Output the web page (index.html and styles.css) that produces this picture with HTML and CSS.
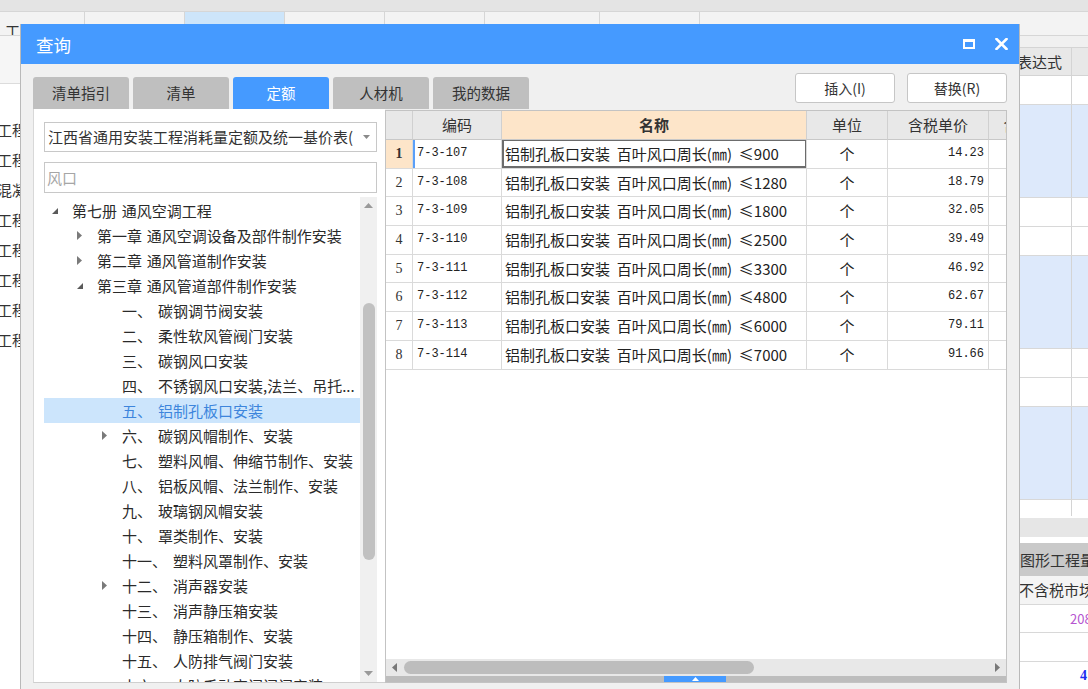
FILE: index.html
```html
<!DOCTYPE html>
<html lang="zh-CN">
<head>
<meta charset="utf-8">
<title>查询</title>
<link rel="stylesheet" href="styles.css">
</head>
<body>
<div class="app">
  <div class="topstrip"></div>
  <div class="apptabs">
    <div class="apptab first">工程概况</div>
    <div class="apptab">取费设置</div>
    <div class="apptab on">分部分项</div>
    <div class="apptab">措施项目</div>
    <div class="apptab">其他项目</div>
    <div class="apptab wide">人材机汇总</div>
    <div class="apptab">费用汇总</div>
  </div>
  <div class="workspace">
    <div class="leftcol">
      <div class="lc-head"></div>
      <div class="lc-gap"></div>
      <div class="lc-row">工程量清单</div>
      <div class="lc-row">工程量清单</div>
      <div class="lc-row">混凝土工程</div>
      <div class="lc-row">工程量清单</div>
      <div class="lc-row">工程量清单</div>
      <div class="lc-row">工程量清单</div>
      <div class="lc-row">工程量清单</div>
      <div class="lc-row">工程量清单</div>
    </div>
    <div class="centerarea"></div>
    <div class="rightcol">
      <div class="rc-top"></div>
      <div class="rc-head"><div class="rc-c1">表达式</div><div class="rc-c2"></div></div>
      <div class="rc-row h29"><div class="rc-c1"></div><div class="rc-c2"></div></div>
      <div class="rc-row h93"><div class="rc-c1"></div><div class="rc-c2"></div></div>
      <div class="rc-row h29"><div class="rc-c1"></div><div class="rc-c2"></div></div>
      <div class="rc-row h29"><div class="rc-c1"></div><div class="rc-c2"></div></div>
      <div class="rc-row h93"><div class="rc-c1"></div><div class="rc-c2"></div></div>
      <div class="rc-row h29"><div class="rc-c1"></div><div class="rc-c2"></div></div>
      <div class="rc-row h29"><div class="rc-c1"></div><div class="rc-c2"></div></div>
      <div class="rc-row h93"><div class="rc-c1"></div><div class="rc-c2"></div></div>
      <div class="rc-row h16"><div class="rc-c1"></div><div class="rc-c2"></div></div>
      <div class="rc-sp2"></div>
      <div class="rc-gray"></div>
      <div class="rc-sp6"></div>
      <div class="rc-dark">图形工程量</div>
      <div class="rc-sub">不含税市场价</div>
      <div class="rc-num purple">208.00</div>
      <div class="rc-num"></div>
      <div class="rc-num blue">4</div>
    </div>
  </div>

  <div class="dialog">
    <div class="dtitle">
      <span class="dt-text">查询</span>
      <span class="dt-icons">
        <svg width="12" height="10" viewBox="0 0 12 10"><rect x="1" y="1.5" width="10" height="7.5" fill="none" stroke="#fff" stroke-width="2"/><rect x="0" y="0" width="12" height="3" fill="#fff"/></svg>
        <svg width="13" height="12" viewBox="0 0 13 12"><path d="M1.5 1L11.5 11M11.5 1L1.5 11" stroke="#fff" stroke-width="2.6" stroke-linecap="square"/></svg>
      </span>
    </div>
    <div class="dbody">
      <div class="toolrow">
        <div class="qtabs">
          <div class="qtab">清单指引</div>
          <div class="qtab">清单</div>
          <div class="qtab on">定额</div>
          <div class="qtab">人材机</div>
          <div class="qtab">我的数据</div>
        </div>
        <div class="btns">
          <div class="btn">插入(I)</div>
          <div class="btn">替换(R)</div>
        </div>
      </div>
      <div class="content">
        <div class="lpanel">
          <div class="combo"><span class="combo-text">江西省通用安装工程消耗量定额及统一基价表(</span><svg width="7" height="4" viewBox="0 0 7 4"><path d="M0 0H7L3.5 4Z" fill="#8a8a8a"/></svg></div>
          <div class="search">风口</div>
          <div class="tree">
            <div class="trows">
              <div class="trow l0"><span class="tg"><svg width="6" height="6" viewBox="0 0 6 6"><path d="M6 0V6H0Z" fill="#5a5a5a"/></svg></span><span class="tx">第七册 通风空调工程</span></div>
              <div class="trow l1"><span class="tg"><svg width="5" height="9" viewBox="0 0 5 9"><path d="M0 0L5 4.5L0 9Z" fill="#7a7a7a"/></svg></span><span class="tx">第一章 通风空调设备及部件制作安装</span></div>
              <div class="trow l1"><span class="tg"><svg width="5" height="9" viewBox="0 0 5 9"><path d="M0 0L5 4.5L0 9Z" fill="#7a7a7a"/></svg></span><span class="tx">第二章 通风管道制作安装</span></div>
              <div class="trow l1"><span class="tg"><svg width="6" height="6" viewBox="0 0 6 6"><path d="M6 0V6H0Z" fill="#5a5a5a"/></svg></span><span class="tx">第三章 通风管道部件制作安装</span></div>
              <div class="trow l2"><span class="tg"></span><span class="num">一、</span><span class="tx">碳钢调节阀安装</span></div>
              <div class="trow l2"><span class="tg"></span><span class="num">二、</span><span class="tx">柔性软风管阀门安装</span></div>
              <div class="trow l2"><span class="tg"></span><span class="num">三、</span><span class="tx">碳钢风口安装</span></div>
              <div class="trow l2"><span class="tg"></span><span class="num">四、</span><span class="tx">不锈钢风口安装,法兰、吊托...</span></div>
              <div class="trow l2 sel"><span class="tg"></span><span class="num">五、</span><span class="tx">铝制孔板口安装</span></div>
              <div class="trow l2"><span class="tg"><svg width="5" height="9" viewBox="0 0 5 9"><path d="M0 0L5 4.5L0 9Z" fill="#7a7a7a"/></svg></span><span class="num">六、</span><span class="tx">碳钢风帽制作、安装</span></div>
              <div class="trow l2"><span class="tg"></span><span class="num">七、</span><span class="tx">塑料风帽、伸缩节制作、安装</span></div>
              <div class="trow l2"><span class="tg"></span><span class="num">八、</span><span class="tx">铝板风帽、法兰制作、安装</span></div>
              <div class="trow l2"><span class="tg"></span><span class="num">九、</span><span class="tx">玻璃钢风帽安装</span></div>
              <div class="trow l2"><span class="tg"></span><span class="num">十、</span><span class="tx">罩类制作、安装</span></div>
              <div class="trow l2"><span class="tg"></span><span class="num">十一、</span><span class="tx">塑料风罩制作、安装</span></div>
              <div class="trow l2"><span class="tg"><svg width="5" height="9" viewBox="0 0 5 9"><path d="M0 0L5 4.5L0 9Z" fill="#7a7a7a"/></svg></span><span class="num">十二、</span><span class="tx">消声器安装</span></div>
              <div class="trow l2"><span class="tg"></span><span class="num">十三、</span><span class="tx">消声静压箱安装</span></div>
              <div class="trow l2"><span class="tg"></span><span class="num">十四、</span><span class="tx">静压箱制作、安装</span></div>
              <div class="trow l2"><span class="tg"></span><span class="num">十五、</span><span class="tx">人防排气阀门安装</span></div>
              <div class="trow l2"><span class="tg"></span><span class="num">十六、</span><span class="tx">人防手动密闭阀门安装</span></div>
            </div>
            <div class="vscroll">
              <div class="va"><svg width="9" height="5" viewBox="0 0 9 5"><path d="M0 5L4.5 0L9 5Z" fill="#9a9a9a"/></svg></div>
              <div class="vthumb"></div>
              <div class="vsp"></div>
              <div class="va"><svg width="9" height="5" viewBox="0 0 9 5"><path d="M0 0L4.5 5L9 0Z" fill="#9a9a9a"/></svg></div>
            </div>
          </div>
        </div>
        <div class="grid">
          <div class="gwrap">
            <div class="gtable">
              <div class="gh"></div><div class="gh">编码</div><div class="gh peach">名称</div><div class="gh">单位</div><div class="gh">含税单价</div><div class="gh">含税合价</div>

              <div class="gc rn cur">1</div><div class="gc code focus">7-3-107</div><div class="gc name selcell">铝制孔板口安装 百叶风口周长(㎜) ≤900</div><div class="gc unit">个</div><div class="gc price">14.23</div><div class="gc"></div>
              <div class="gc rn">2</div><div class="gc code">7-3-108</div><div class="gc name">铝制孔板口安装 百叶风口周长(㎜) ≤1280</div><div class="gc unit">个</div><div class="gc price">18.79</div><div class="gc"></div>
              <div class="gc rn">3</div><div class="gc code">7-3-109</div><div class="gc name">铝制孔板口安装 百叶风口周长(㎜) ≤1800</div><div class="gc unit">个</div><div class="gc price">32.05</div><div class="gc"></div>
              <div class="gc rn">4</div><div class="gc code">7-3-110</div><div class="gc name">铝制孔板口安装 百叶风口周长(㎜) ≤2500</div><div class="gc unit">个</div><div class="gc price">39.49</div><div class="gc"></div>
              <div class="gc rn">5</div><div class="gc code">7-3-111</div><div class="gc name">铝制孔板口安装 百叶风口周长(㎜) ≤3300</div><div class="gc unit">个</div><div class="gc price">46.92</div><div class="gc"></div>
              <div class="gc rn">6</div><div class="gc code">7-3-112</div><div class="gc name">铝制孔板口安装 百叶风口周长(㎜) ≤4800</div><div class="gc unit">个</div><div class="gc price">62.67</div><div class="gc"></div>
              <div class="gc rn">7</div><div class="gc code">7-3-113</div><div class="gc name">铝制孔板口安装 百叶风口周长(㎜) ≤6000</div><div class="gc unit">个</div><div class="gc price">79.11</div><div class="gc"></div>
              <div class="gc rn">8</div><div class="gc code">7-3-114</div><div class="gc name">铝制孔板口安装 百叶风口周长(㎜) ≤7000</div><div class="gc unit">个</div><div class="gc price">91.66</div><div class="gc"></div>
            </div>
          </div>
          <div class="gfill"></div>
          <div class="hscroll">
            <div class="ha"><svg width="5" height="9" viewBox="0 0 5 9"><path d="M5 0V9L0 4.5Z" fill="#787878"/></svg></div>
            <div class="hthumb"></div>
            <div class="hsp"></div>
            <div class="ha"><svg width="5" height="9" viewBox="0 0 5 9"><path d="M0 0V9L5 4.5Z" fill="#787878"/></svg></div>
          </div>
          <div class="gbar"><div class="gbar-tab"><svg width="7" height="4" viewBox="0 0 7 4"><path d="M0 4L3.5 0L7 4Z" fill="#fff"/></svg></div></div>
        </div>
      </div>
    </div>
  </div>
</div>
</body>
</html>
```

FILE: styles.css
```css
* { box-sizing: border-box; }
html, body { margin: 0; padding: 0; }
body {
  font-family: "Noto Sans CJK SC", "Noto Sans", sans-serif;
  color: #333;
  background: #fff;
}
.app {
  position: relative;
  width: 1088px;
  height: 689px;
  overflow: hidden;
  background: #fff;
}

/* background application */
.topstrip { height: 12px; background: #e4e4e4; border-bottom: 1px solid #d6d6d6; }
.apptabs { display: flex; height: 24px; background: #f3f3f3; border-bottom: 1px solid #d6d6d6; }
.apptab {
  width: 100px; flex: none;
  border-right: 1px solid #d6d6d6;
  font-size: 15px; line-height: 37px;
  text-align: center; white-space: nowrap; overflow: hidden;
  color: #333;
}
.apptab.first { width: 85px; text-align: left; padding-left: 5px; }
.apptab.wide { width: 115px; }
.apptab.on { background: #cde5fa; }

.workspace { display: flex; height: 653px; }
.leftcol { width: 100px; flex: none; background: #fff; overflow: hidden; }
.lc-head { height: 48px; background: #f6f6f6; border-bottom: 1px solid #dcdcdc; }
.lc-gap { height: 31px; }
.lc-row { height: 30px; line-height: 30px; font-size: 15px; margin-left: -3px; white-space: nowrap; color: #333; }
.centerarea { flex: 1; background: #fff; }

.rightcol { width: 80px; flex: none; display: flex; flex-direction: column; font-size: 15px; overflow: hidden; }
.rc-top { height: 11px; background: #f0f0f0; flex: none; }
.rc-head { height: 29px; flex: none; display: flex; background: #e8e8e8; border-top: 1px solid #d4d4d4; border-bottom: 1px solid #d4d4d4; line-height: 27px; }
.rc-row { display: flex; flex: none; border-bottom: 1px solid #d8d8d8; background: #fff; }
.rc-c1 { width: 64px; flex: none; border-right: 1px solid #d4d4d4; text-align: center; white-space: nowrap; }
.rc-c2 { flex: 1; }
.h29 { height: 29px; }
.h93 { height: 93px; background: #dde9fb; }
.h16 { height: 16px; border-bottom: none; }
.rc-sp2 { height: 2px; flex: none; background: #fff; }
.rc-gray { height: 19px; flex: none; background: #e6e6e6; }
.rc-sp6 { height: 6px; flex: none; background: #fff; }
.rc-dark { height: 33px; flex: none; background: #c9c9c9; line-height: 33px; padding-left: 12px; white-space: nowrap; color: #333; }
.rc-sub { height: 29px; flex: none; background: #f4f4f4; border-bottom: 1px solid #d8d8d8; line-height: 28px; padding-left: 11px; white-space: nowrap; }
.rc-num { height: 29px; flex: none; border-bottom: 1px solid #d8d8d8; line-height: 28px; white-space: nowrap; font-size: 13px; }
.rc-num.purple { color: #b655d0; padding-left: 62px; height: 28px; }
.rc-num.blue { color: #1c2cf0; font-weight: bold; padding-left: 72px; font-family: "Liberation Serif", serif; font-size: 14px; border-bottom: none; }

/* dialog window */
.dialog {
  position: absolute;
  left: 20px; top: 24px;
  width: 1000px; height: 680px;
  background: #f0f0f0;
  border-left: 1px solid #b9b9b9;
  border-right: 1px solid #b9b9b9;
}
.dtitle {
  height: 40px;
  background: #459aff;
  display: flex; align-items: center; justify-content: space-between;
  padding: 0 11px 0 15px;
}
.dt-text { color: #fff; font-size: 17.5px; line-height: 40px; padding-top: 2px; }
.dt-icons { display: flex; align-items: center; gap: 20px; }
.dt-icons svg { display: block; }

.dbody { padding: 9px 12px 0 12px; }
.toolrow { display: flex; justify-content: space-between; height: 36px; }
.qtabs { display: flex; gap: 4px; margin-top: 4px; }
.qtab {
  width: 96px; height: 32px;
  background: #bfbfbf;
  border-radius: 3px 3px 0 0;
  text-align: center;
  font-size: 14.5px; line-height: 32px;
  color: #333;
}
.qtab.on { background: #459aff; color: #fff; }
.btns { display: flex; gap: 12px; }
.btn {
  width: 100px; height: 30px;
  background: #fff;
  border: 1px solid #c6c6c6;
  border-radius: 3px;
  font-size: 14px; line-height: 28px;
  text-align: center; color: #333;
}

.content { display: flex; height: 574px; }

/* left panel */
.lpanel {
  width: 352px; flex: none;
  background: #fff;
  border-left: 1px solid #d8d8d8;
  border-bottom: 1px solid #cfcfcf;
  padding: 13px 8px 0 10px;
}
.combo {
  height: 30px;
  border: 1px solid #c8c8c8;
  display: flex; align-items: center; justify-content: space-between;
  padding: 0 6px 0 3px;
  font-size: 15px; line-height: 28px;
  white-space: nowrap; overflow: hidden;
  color: #333;
}
.combo-text { overflow: hidden; }
.combo svg { flex: none; margin-left: 6px; }
.search {
  margin-top: 10px;
  height: 31px;
  border: 1px solid #c8c8c8;
  padding-left: 2px;
  font-size: 15px; line-height: 29px;
  color: #a6a6a6;
}
.tree { margin-top: 4px; height: 485px; display: flex; }
.trows { width: 316px; flex: none; overflow: hidden; padding-top: 1px; }
.trow {
  height: 25px;
  display: flex; align-items: center;
  font-size: 15px; line-height: 25px;
  white-space: nowrap;
  color: #2a2a2a;
  word-spacing: 1.5px;
}
.trow.l0 { padding-left: 3px; }
.trow.l1 { padding-left: 28px; }
.trow.l2 { padding-left: 53px; }
.tg { width: 25px; flex: none; display: flex; align-items: center; padding-left: 5px; }
.tg svg { display: block; }
.num { margin-right: 6px; }
.trow.sel { background: #cce5fc; color: #3d85dc; }

.vscroll { width: 17px; flex: none; background: #f0f0f0; display: flex; flex-direction: column; align-items: center; }
.va { height: 17px; width: 17px; flex: none; display: flex; align-items: center; justify-content: center; }
.va svg { display: block; }
.vthumb { width: 12px; height: 257px; flex: none; border-radius: 6px; background: #c1c1c1; margin-top: 89px; }
.vsp { flex: 1; }

/* grid */
.grid {
  width: 622px; height: 573px; flex: none;
  margin-top: 1px;
  border: 1px solid #c3c3c3;
  background: #fff;
  display: flex; flex-direction: column;
  overflow: hidden;
}
.gwrap { overflow: hidden; flex: none; }
.gtable {
  display: grid;
  grid-template-columns: 27px 89px 305px 81px 101px 90px;
  width: 693px;
}
.gh {
  height: 29px;
  background: #e8e8e8;
  border-right: 1px solid #d0d0d0;
  border-bottom: 1px solid #c8c8c8;
  text-align: center;
  font-size: 15px; line-height: 28px;
  color: #333; white-space: nowrap;
}
.gh.peach { background: #fde5c9; font-weight: bold; }
.gc {
  height: 28.7px;
  border-right: 1px solid #dadada;
  border-bottom: 1px solid #dadada;
  font-size: 15px; line-height: 27.7px;
  white-space: nowrap; overflow: hidden;
  color: #222;
}
.gc.rn { text-align: center; font-family: "Liberation Serif", serif; font-size: 14px; color: #333; }
.gc.rn.cur { background: #fde5c9; font-weight: bold; }
.gc.code { font-family: "Liberation Mono", monospace; font-size: 12px; padding-left: 4px; }
.gc.code.focus { box-shadow: inset 2px 0 0 #5a9ff8; }
.gc.name { padding-left: 3px; word-spacing: 3.5px; }
.gc.name.selcell { box-shadow: inset 2px 0 0 #6c6c6c, inset 0 -2px 0 #6c6c6c, inset -1px 0 0 #6c6c6c, inset 0 1px 0 #6c6c6c; }
.gc.unit { text-align: center; }
.gc.price { font-family: "Liberation Mono", monospace; font-size: 12px; text-align: right; padding-right: 4px; }

.gfill { flex: 1; }
.hscroll { height: 17px; flex: none; background: #e8e8e8; display: flex; align-items: center; }
.ha { width: 17px; height: 17px; flex: none; display: flex; align-items: center; justify-content: center; }
.ha svg { display: block; }
.hthumb { width: 350px; height: 13px; flex: none; border-radius: 7px; background: #bdbdbd; margin-left: 1px; }
.hsp { flex: 1; }
.gbar { height: 6px; flex: none; background: #bdbdbd; padding-left: 278px; }
.gbar-tab { width: 62px; height: 6px; background: #459aff; display: flex; justify-content: center; align-items: center; }
.gbar-tab svg { display: block; }
```
